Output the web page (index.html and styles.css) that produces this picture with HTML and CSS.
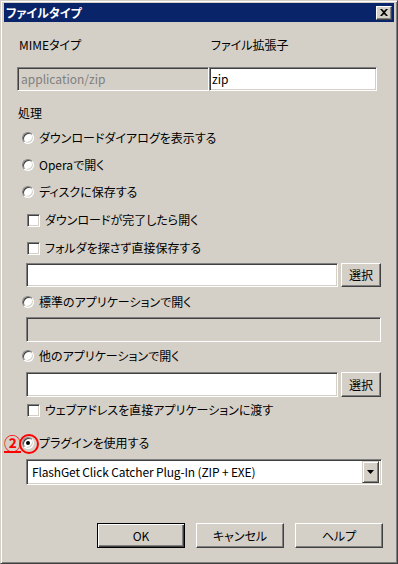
FILE: index.html
```html
<!DOCTYPE html>
<html lang="ja">
<head>
<meta charset="utf-8">
<title>ファイルタイプ</title>
<link rel="stylesheet" href="styles.css">
</head>
<body>
<div class="window">
  <div class="titlebar">
    <span class="title">ファイルタイプ</span>
    <div class="close"><svg width="8" height="7" viewBox="0 0 8 7"><path d="M0 0h2l2 2 2-2h2L5 3.5 8 7H6L4 5 2 7H0l3-3.5z" fill="#000"/></svg></div>
  </div>
  <div class="body">
    <div class="row labels"><span class="lbl-mime">MIMEタイプ</span><span class="lbl-ext">ファイル拡張子</span></div>
    <div class="row fields">
      <div class="field disabled mime">application/zip</div>
      <div class="field ext">zip</div>
    </div>
    <div class="row section">処理</div>
    <div class="row opt r1"><span class="radio"></span><span>ダウンロードダイアログを表示する</span></div>
    <div class="row opt r2"><span class="radio"></span><span>Operaで開く</span></div>
    <div class="row opt r3"><span class="radio"></span><span>ディスクに保存する</span></div>
    <div class="row chk c1"><span class="check"></span><span>ダウンロードが完了したら開く</span></div>
    <div class="row chk c2"><span class="check"></span><span>フォルダを探さず直接保存する</span></div>
    <div class="row pathrow p1"><div class="field path"></div><div class="btn small">選択</div></div>
    <div class="row opt r4"><span class="radio"></span><span>標準のアプリケーションで開く</span></div>
    <div class="row d1"><div class="field disabled wide"></div></div>
    <div class="row opt r5"><span class="radio"></span><span>他のアプリケーションで開く</span></div>
    <div class="row pathrow p2"><div class="field path"></div><div class="btn small">選択</div></div>
    <div class="row chk c3"><span class="check"></span><span>ウェブアドレスを直接アプリケーションに渡す</span></div>
    <div class="row opt r6">
      <span class="mark">②</span>
      <span class="radio checked"><span class="ring"></span></span><span>プラグインを使用する</span>
    </div>
    <div class="row selrow">
      <div class="field select"><span class="seltext">FlashGet Click Catcher Plug-In (ZIP + EXE)</span>
        <div class="dropbtn"><svg width="7" height="4" viewBox="0 0 7 4"><path d="M0 0h7L3.5 4z" fill="#000"/></svg></div>
      </div>
    </div>
    <div class="row buttons">
      <div class="btn big default">OK</div>
      <div class="btn big">キャンセル</div>
      <div class="btn big">ヘルプ</div>
    </div>
  </div>
</div>
</body>
</html>
```

FILE: styles.css
```css
html, body {
  margin: 0;
  padding: 0;
}
body {
  width: 398px;
  height: 564px;
  overflow: hidden;
  background: #D4D0C8;
  font-family: "Noto Sans CJK JP", "Noto Sans", sans-serif;
  font-size: 12px;
  color: #000;
  font-feature-settings: "palt";
}
.window {
  box-sizing: border-box;
  width: 398px;
  height: 564px;
  border: 1px solid;
  border-color: #D4D0C8 #404040 #404040 #D4D0C8;
  box-shadow: inset 1px 1px #fff, inset -1px -1px #808080;
  padding: 2px 3px 0 2px;
  display: flex;
  flex-direction: column;
}
.titlebar {
  height: 19px;
  margin-left: 1px;
  background: #0A246A;
  display: flex;
  align-items: center;
  justify-content: space-between;
  padding: 0 2px 0 2px;
}
.title {
  color: #fff;
  font-weight: bold;
  font-size: 12px;
  line-height: 19px;
}
.close {
  box-sizing: border-box;
  width: 16px;
  height: 14px;
  background: #D4D0C8;
  border: 1px solid;
  border-color: #fff #404040 #404040 #fff;
  box-shadow: inset -1px -1px #808080;
  display: flex;
  align-items: center;
  justify-content: center;
}
.body {
  display: flex;
  flex-direction: column;
}
.row {
  display: flex;
  align-items: center;
  height: 16px;
  line-height: 16px;
  white-space: nowrap;
}
.labels { margin-top: 15px; }
.lbl-mime { margin-left: 16px; width: 192px; }
.fields { margin-top: 14px; height: 24px; margin-left: 14px; }
.field {
  box-sizing: border-box;
  background: #fff;
  border: 1px solid;
  border-color: #808080 #fff #fff #808080;
  box-shadow: inset 1px 1px #404040, inset -1px -1px #D4D0C8;
  height: 24px;
  line-height: 22px;
  padding-left: 3px;
  overflow: hidden;
}
.field.disabled {
  background: #D4D0C8;
  color: #808080;
}
.mime { width: 192px; }
.ext { width: 168px; padding-left: 2px; }
.section { margin-top: 14px; margin-left: 15px; }
.opt { margin-left: 19px; }
.r1 { margin-top: 9px; }
.r2 { margin-top: 11px; }
.r3 { margin-top: 11px; }
.radio {
  position: relative;
  box-sizing: border-box;
  width: 12px;
  height: 12px;
  border-radius: 50%;
  background: #fff;
  border: 1px solid;
  border-color: #808080 #fff #fff #808080;
  box-shadow: inset 1px 1px #404040, inset -1px -1px #D4D0C8;
  margin-right: 5px;
  flex: none;
}
.radio.checked::after {
  content: "";
  position: absolute;
  left: 3px;
  top: 3px;
  width: 4px;
  height: 4px;
  border-radius: 50%;
  background: #000;
}
.ring {
  position: absolute;
  left: -4px;
  top: -4px;
  width: 16px;
  height: 16px;
  border: 2px solid #ff0000;
  border-radius: 50%;
}
.chk { margin-left: 24px; }
.c1 { margin-top: 12px; }
.c2 { margin-top: 12px; }
.check {
  box-sizing: border-box;
  width: 13px;
  height: 13px;
  background: #fff;
  border: 1px solid;
  border-color: #808080 #fff #fff #808080;
  box-shadow: inset 1px 1px #404040, inset -1px -1px #D4D0C8;
  margin-right: 5px;
  flex: none;
}
.pathrow { height: 24px; margin-left: 23px; }
.p1 { margin-top: 7px; }
.path { width: 312px; }
.btn {
  box-sizing: border-box;
  background: #D4D0C8;
  border: 1px solid;
  border-color: #fff #404040 #404040 #fff;
  box-shadow: inset -1px -1px #808080;
  display: flex;
  align-items: center;
  justify-content: center;
}
.btn.small { width: 40px; height: 24px; margin-left: 3px; }
.r4 { margin-top: 7px; }
.d1 { margin-top: 7px; margin-left: 23px; height: 25px; }
.wide { width: 355px; height: 25px; }
.r5 { margin-top: 6px; }
.p2 { margin-top: 8px; height: 25px; }
.p2 .field, .p2 .btn { height: 25px; }
.c3 { margin-top: 5px; }
.r6 { margin-top: 17px; margin-left: 0; }
.mark {
  color: #ff0000;
  width: 19px;
  font-size: 17px;
  font-weight: bold;
  line-height: 16px;
  text-decoration: underline;
  text-decoration-thickness: 2px;
  text-align: center;
}
.selrow { margin-top: 8px; margin-left: 23px; height: 26px; }
.select {
  width: 356px;
  height: 26px;
  display: flex;
  align-items: center;
  justify-content: space-between;
  padding: 0 2px 0 5px;
}
.seltext { letter-spacing: -0.15px; }
.dropbtn {
  box-sizing: border-box;
  width: 17px;
  height: 22px;
  background: #D4D0C8;
  border: 1px solid;
  border-color: #D4D0C8 #404040 #404040 #D4D0C8;
  box-shadow: inset 1px 1px #fff, inset -1px -1px #808080;
  display: flex;
  align-items: center;
  justify-content: center;
}
.buttons { margin-top: 38px; margin-left: 94px; height: 25px; gap: 11px; }
.btn.big { width: 88px; height: 25px; }
.btn.default {
  border: 1px solid #000;
  box-shadow: inset 1px 1px #fff, inset -1px -1px #404040, inset -2px -2px #808080;
}
```
